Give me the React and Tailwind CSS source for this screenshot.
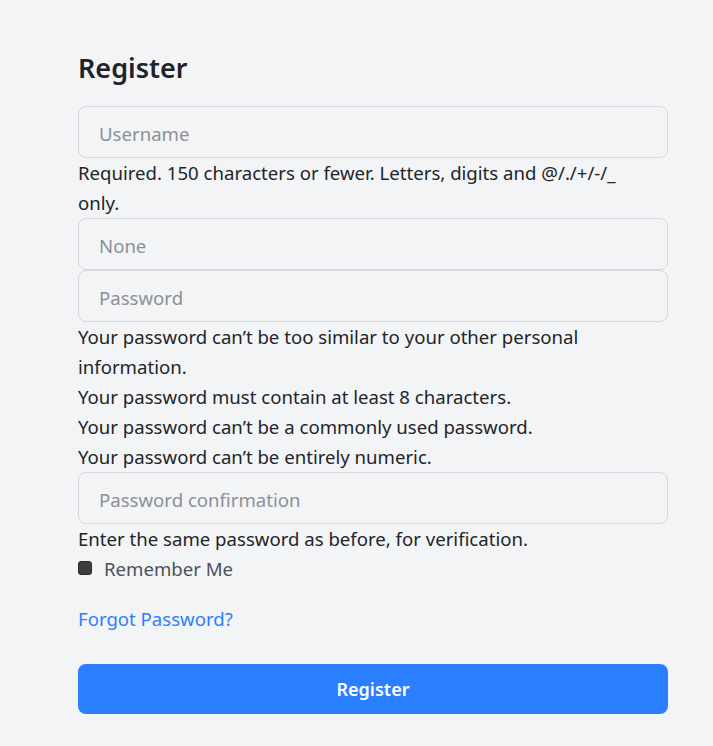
export default function App() {
  return (
    <div className="min-h-[746px] bg-[#f3f4f6] text-[#212529] font-['Noto_Sans',sans-serif]">
      <div className="w-[590px] ml-[78px] pt-[46px]">
        <h2 className="text-[27px] font-semibold leading-[44px] text-[#1f2329]">Register</h2>
        <form className="mt-[16px] flex flex-col text-[18.6px] leading-[30px]">
          <input
            type="text"
            placeholder="Username"
            className="h-[52px] w-full rounded-[8px] border border-[#d6d8dd] bg-transparent px-[20px] pt-[2px] text-[18.6px] placeholder:text-[#8b9097] outline-none"
          />
          <p className="pr-[40px]">Required. 150 characters or fewer. Letters, digits and @/./+/-/_ only.</p>
          <input
            type="email"
            placeholder="None"
            className="h-[52px] w-full rounded-[8px] border border-[#d6d8dd] bg-transparent px-[20px] pt-[2px] text-[18.6px] placeholder:text-[#8b9097] outline-none"
          />
          <input
            type="password"
            placeholder="Password"
            className="h-[52px] w-full rounded-[8px] border border-[#d6d8dd] bg-transparent px-[20px] pt-[2px] text-[18.6px] placeholder:text-[#8b9097] outline-none"
          />
          <ul>
            <li>Your password can’t be too similar to your other personal information.</li>
            <li>Your password must contain at least 8 characters.</li>
            <li>Your password can’t be a commonly used password.</li>
            <li>Your password can’t be entirely numeric.</li>
          </ul>
          <input
            type="password"
            placeholder="Password confirmation"
            className="h-[52px] w-full rounded-[8px] border border-[#d6d8dd] bg-transparent px-[20px] pt-[2px] text-[18.6px] placeholder:text-[#8b9097] outline-none"
          />
          <p>Enter the same password as before, for verification.</p>
          <label className="flex items-center gap-[12px] text-[#4b5058]">
            <span className="block w-[14px] h-[14px] -mt-[3px] rounded-[3px] bg-[#3d3d3d] border border-[#2a2a2a]"></span>
            Remember Me
          </label>
          <a href="#" className="mt-[20px] text-[#2b7fff]">Forgot Password?</a>
          <button
            type="button"
            className="mt-[30px] h-[50px] w-full rounded-[8px] bg-[#2b7fff] text-white font-semibold text-[18px]"
          >
            Register
          </button>
        </form>
      </div>
    </div>
  );
}
